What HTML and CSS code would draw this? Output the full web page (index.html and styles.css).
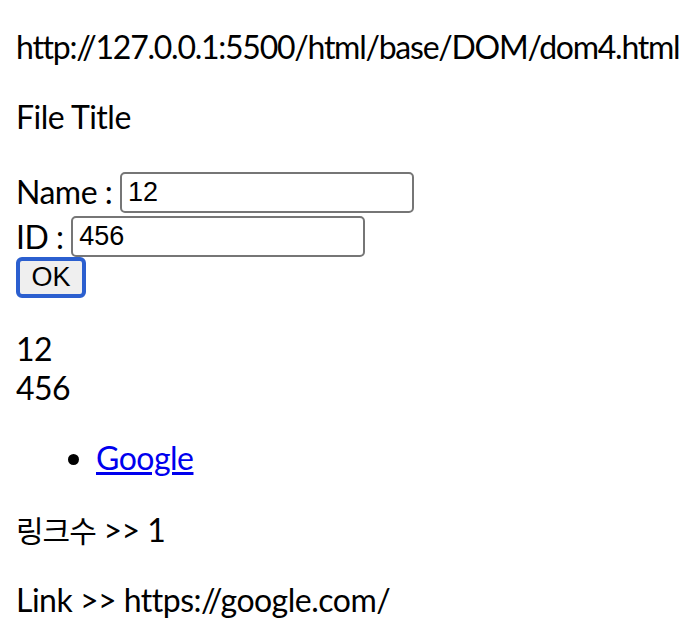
FILE: index.html
```html
<!DOCTYPE html>
<html lang="ko">
<head>
<meta charset="utf-8">
<title>dom4</title>
<link rel="stylesheet" href="styles.css">
</head>
<body>
<p class="para url">http://127.0.0.1:5500/html/base/DOM/dom4.html</p>
<p class="para">File Title</p>
<form class="form">
  <div class="row row-name">Name :&nbsp;<input class="field" type="text" value="12"></div>
  <div class="row">ID :&nbsp;<input class="field" type="text" value="456"></div>
  <div class="row"><button class="btn" type="button">OK</button></div>
</form>
<div class="result">12<br>456</div>
<ul class="links">
  <li><a class="link" href="#">Google</a></li>
</ul>
<p class="para"><span class="ko">링크수</span> &gt;&gt; 1</p>
<p class="para">Link &gt;&gt; https://google.com/</p>
</body>
</html>
```
FILE: styles.css
```css
html, body {
  background: #ffffff;
}
body {
  margin: 0;
  padding: 28px 16px 0;
  font-family: Lato, "Noto Sans CJK KR", sans-serif;
  font-size: 32px;
  line-height: 38.4px;
  letter-spacing: -0.5px;
  color: #000000;
}
.para {
  margin: 32px 0;
  white-space: nowrap;
}
.para:first-child {
  margin-top: 0;
}
.url {
  letter-spacing: -1.25px;
}
.ko {
  font-family: "Noto Sans CJK KR", sans-serif;
  font-size: 30px;
  letter-spacing: -1px;
}
.form {
  margin: 0 0 32px 0;
  padding-top: 3px;
}
.row {
  display: flex;
  align-items: center;
}
.row-name {
  margin-bottom: 3.5px;
}
.field {
  box-sizing: border-box;
  width: 294px;
  height: 41px;
  margin: 0;
  padding: 2px 6px;
  border: 2px solid #767676;
  border-radius: 5px;
  font-family: "Liberation Sans", Arial, sans-serif;
  font-size: 27px;
  letter-spacing: 0;
  color: #000000;
  background: #ffffff;
  outline: none;
}
.btn {
  box-sizing: border-box;
  width: 70px;
  height: 41px;
  margin: 0;
  padding: 0;
  border: 4px solid #2b5fcf;
  border-radius: 6px;
  background: #efefef;
  font-family: "Liberation Sans", Arial, sans-serif;
  font-size: 27px;
  letter-spacing: 0;
  color: #000000;
}
.result {
  margin: 0;
}
.links {
  margin: 32px 0;
  padding-left: 80px;
}
.link {
  color: #0000ee;
  text-decoration: underline;
}
```
